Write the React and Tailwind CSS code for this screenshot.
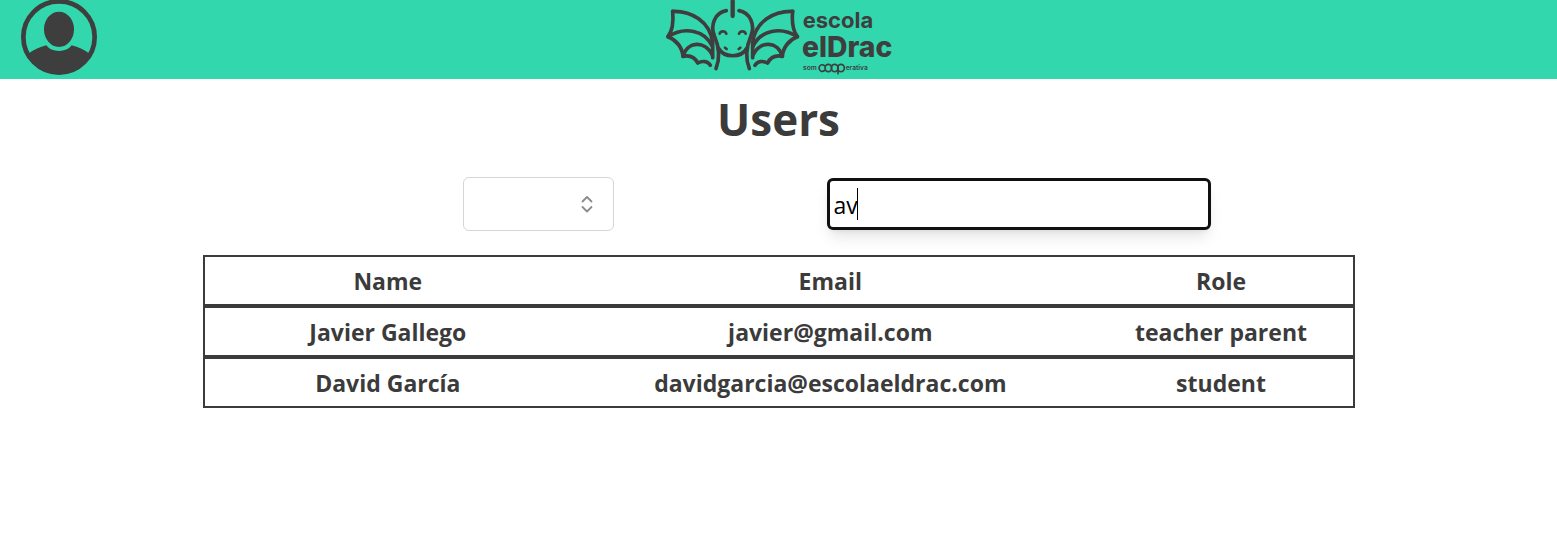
import { useState } from 'react';

const users = [
  { name: 'Javier Gallego', email: 'javier@gmail.com', role: 'teacher parent' },
  { name: 'David García', email: 'davidgarcia@escolaeldrac.com', role: 'student' },
];

function AvatarIcon() {
  return (
    <svg className="block h-[79px] w-[76px]" viewBox="63 0 228 237" aria-hidden="true">
      <circle cx="177" cy="111" r="107" fill="none" stroke="#3e3e3e" strokeWidth="14" />
      <ellipse cx="177" cy="88" rx="45" ry="53" fill="#3e3e3e" />
      <path
        d="M84 163 C98 150 120 141 139 136 C147 147 161 153 177 153 C193 153 207 147 215 136 C234 141 256 150 270 163 C252 200 218 223 177 223 C136 223 102 200 84 163 Z"
        fill="#3e3e3e"
      />
    </svg>
  );
}

function Wing() {
  return (
    <>
      <path d="M38 34 C93 32 151 64 158 128 L158 173" />
      <path d="M38 34 C41 65 38 91 24 110 C48 119 67 142 69 169 C89 165 105 173 113 189 C128 181 143 184 151 196" />
      <path d="M24 110 C74 78 135 91 157 139" />
      <path d="M69 169 C81 124 135 120 157 165" />
    </>
  );
}

function Logo() {
  return (
    <svg className="block h-[79px] w-60" viewBox="-3 0 720 237" role="img" aria-label="escola elDrac">
      <g fill="none" stroke="#3e3e3e" strokeWidth="11" strokeLinecap="round" strokeLinejoin="round">
        <Wing />
        <g transform="translate(436 0) scale(-1 1)">
          <Wing />
        </g>
        <path d="M218 4 V48" strokeWidth="13" />
        <path d="M199 32 C165 38 150 75 163 107 C173 130 184 165 168 206" />
        <path d="M237 32 C271 38 286 75 273 107 C263 130 252 165 268 206" />
        <path d="M175 144 C192 175 244 175 261 144" />
        <path d="M179 101 C182 92 195 92 199 101 M237 101 C241 92 254 92 257 101" strokeWidth="8" />
        <path d="M195 143 L200 147 M241 143 L236 147" strokeWidth="8" />
      </g>
      <g fill="#3e3e3e" className="font-['Inter',sans-serif]">
        <text x="428" y="83" fontSize="66" fontWeight="700">escola</text>
        <text x="426" y="171" fontSize="85" fontWeight="800">elDrac</text>
        <text x="429" y="209" fontSize="20" fontWeight="600">som</text>
        <text x="557" y="209" fontSize="20" fontWeight="600">erativa</text>
      </g>
      <g fill="none" stroke="#3e3e3e" strokeWidth="5" strokeLinecap="round">
        <path d="M493 197 C488 192 477 194 477 204 C477 214 488 217 494 211" />
        <ellipse cx="505" cy="204" rx="10" ry="11" />
        <ellipse cx="524" cy="204" rx="10" ry="11" />
        <ellipse cx="543" cy="204" rx="10" ry="11" />
        <path d="M534 204 V221" />
      </g>
    </svg>
  );
}

export default function App() {
  const [query, setQuery] = useState('av');

  return (
    <div className="min-h-screen bg-white font-['Open_Sans','Noto_Sans',sans-serif] text-[#3b3b3b]">
      <header className="grid grid-cols-[1fr_auto_1fr] bg-[#33d7ae] px-[21px]">
        <button type="button" aria-label="Profile" className="justify-self-start">
          <AvatarIcon />
        </button>
        <Logo />
      </header>

      <main className="flex flex-col items-center">
        <h1 className="pt-2 text-[44px] leading-[64px] font-bold">Users</h1>

        <div className="mt-[26px] grid w-full max-w-[960px] grid-cols-2 items-center justify-items-center">
          <div className="relative">
            <select
              aria-label="Role"
              className="block h-[54px] w-[151px] appearance-none rounded-md border border-gray-300 bg-white px-3 text-[23px]"
            >
              <option value=""></option>
              <option value="teacher">teacher</option>
              <option value="parent">parent</option>
              <option value="student">student</option>
            </select>
            <svg
              className="pointer-events-none absolute top-[18px] right-[21px] h-[18px] w-3"
              viewBox="0 0 12 18"
              fill="none"
              stroke="#8b8b8b"
              strokeWidth="1.8"
              strokeLinecap="round"
              strokeLinejoin="round"
              aria-hidden="true"
            >
              <path d="M1.5 6.5 L6 2 L10.5 6.5 M1.5 12 L6 16.5 L10.5 12" />
            </svg>
          </div>

          <div className="relative w-96">
            <input
              type="text"
              aria-label="Search users"
              value={query}
              onChange={(e) => setQuery(e.target.value)}
              className="block h-[52px] w-full rounded-md border-3 border-[#101010] bg-white px-1 pt-0.5 text-[23px] text-black caret-transparent shadow-lg outline-none"
            />
            {query === 'av' && (
              <span className="pointer-events-none absolute top-[10px] left-[30px] h-8 w-px bg-black" />
            )}
          </div>
        </div>

        <table className="mt-6 w-full max-w-6xl table-fixed border-separate border-spacing-0 text-center text-[23px] font-bold">
          <colgroup>
            <col className="w-[32%]" />
            <col className="w-[45%]" />
            <col className="w-[23%]" />
          </colgroup>
          <thead>
            <tr>
              <th className="h-[51px] border-y-2 border-l-2 border-[#3b3b3b] pt-0.5">Name</th>
              <th className="h-[51px] border-y-2 border-[#3b3b3b] pt-0.5">Email</th>
              <th className="h-[51px] border-y-2 border-r-2 border-[#3b3b3b] pt-0.5">Role</th>
            </tr>
          </thead>
          <tbody>
            {users.map((user) => (
              <tr key={user.email}>
                <td className="h-[51px] border-y-2 border-l-2 border-[#3b3b3b] pt-0.5">{user.name}</td>
                <td className="h-[51px] border-y-2 border-[#3b3b3b] pt-0.5">{user.email}</td>
                <td className="h-[51px] border-y-2 border-r-2 border-[#3b3b3b] pt-0.5">{user.role}</td>
              </tr>
            ))}
          </tbody>
        </table>
      </main>
    </div>
  );
}
